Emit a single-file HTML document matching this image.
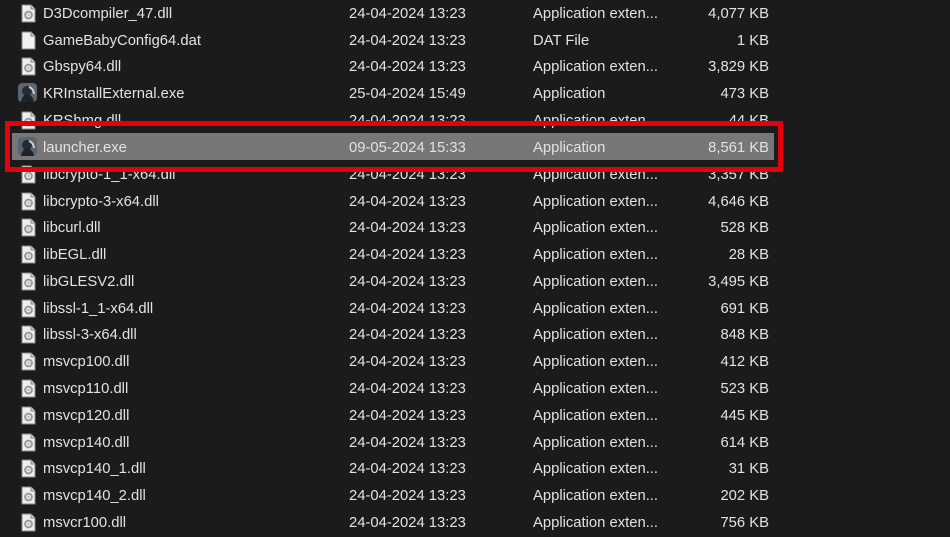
<!DOCTYPE html>
<html><head><meta charset="utf-8"><style>
html,body{margin:0;padding:0;background:#1b1b1b;width:950px;height:537px;overflow:hidden}
body{position:relative;font-family:"Liberation Sans",sans-serif;font-size:14.8px;color:#e2e2e2}
.r{position:absolute;left:0;width:950px;height:27px;line-height:31px}
.r span{position:absolute;white-space:nowrap}
.n{left:43px}.d{left:349px}.t{left:533px}.s{right:181px}
.ic{position:absolute;left:21px;top:5px;width:15px;height:19px}
.hl{position:absolute;left:12px;top:133px;width:762px;height:27px;background:#777}
.box{position:absolute;left:5px;top:121px;width:768px;height:41px;border:5px solid #e1000c}
</style></head><body>
<div class="hl"></div>
<svg width="0" height="0" style="position:absolute"><defs>
<symbol id="pg" viewBox="0 0 15 19"><path d="M1 1h9l4 4v13H1z" fill="#f2f2f2" stroke="#888" stroke-width="1"/><path d="M10 1v4h4" fill="#ccc" stroke="#888" stroke-width="1"/></symbol>
<symbol id="dl" viewBox="0 0 15 19"><path d="M1 1h9l4 4v13H1z" fill="#eee" stroke="#888" stroke-width="1"/><path d="M10 1v4h4" fill="#ccc" stroke="#888"/><circle cx="7.5" cy="11" r="3.4" fill="none" stroke="#9a9a9a" stroke-width="2"/><circle cx="7.5" cy="11" r="1.2" fill="#bbb"/></symbol>
<symbol id="ex" viewBox="0 0 19 19"><rect x="0" y="0" width="19" height="19" rx="4" fill="#5d6470"/><circle cx="9" cy="8" r="5" fill="#222a33"/><path d="M3 19c1-6 4-8 6-8s6 2 7 8z" fill="#1d232b"/><path d="M11 4c3 1 5 4 5 7" stroke="#c8ccd2" stroke-width="2" fill="none"/></symbol>
</defs></svg>
<div class="r" style="top:-1px"><svg class="ic"><use href="#dl"/></svg><span class="n">D3Dcompiler_47.dll</span><span class="d">24-04-2024 13:23</span><span class="t">Application exten...</span><span class="s">4,077 KB</span></div>
<div class="r" style="top:26px"><svg class="ic"><use href="#pg"/></svg><span class="n">GameBabyConfig64.dat</span><span class="d">24-04-2024 13:23</span><span class="t">DAT File</span><span class="s">1 KB</span></div>
<div class="r" style="top:52px"><svg class="ic"><use href="#dl"/></svg><span class="n">Gbspy64.dll</span><span class="d">24-04-2024 13:23</span><span class="t">Application exten...</span><span class="s">3,829 KB</span></div>
<div class="r" style="top:79px"><svg class="ic" style="left:18px;top:4px;width:19px;height:19px"><use href="#ex"/></svg><span class="n">KRInstallExternal.exe</span><span class="d">25-04-2024 15:49</span><span class="t">Application</span><span class="s">473 KB</span></div>
<div class="r" style="top:106px"><svg class="ic"><use href="#dl"/></svg><span class="n">KRShmg.dll</span><span class="d">24-04-2024 13:23</span><span class="t">Application exten...</span><span class="s">44 KB</span></div>
<div class="r" style="top:133px"><svg class="ic" style="left:18px;top:4px;width:19px;height:19px"><use href="#ex"/></svg><span class="n">launcher.exe</span><span class="d">09-05-2024 15:33</span><span class="t">Application</span><span class="s">8,561 KB</span></div>
<div class="r" style="top:160px"><svg class="ic"><use href="#dl"/></svg><span class="n">libcrypto-1_1-x64.dll</span><span class="d">24-04-2024 13:23</span><span class="t">Application exten...</span><span class="s">3,357 KB</span></div>
<div class="r" style="top:187px"><svg class="ic"><use href="#dl"/></svg><span class="n">libcrypto-3-x64.dll</span><span class="d">24-04-2024 13:23</span><span class="t">Application exten...</span><span class="s">4,646 KB</span></div>
<div class="r" style="top:213px"><svg class="ic"><use href="#dl"/></svg><span class="n">libcurl.dll</span><span class="d">24-04-2024 13:23</span><span class="t">Application exten...</span><span class="s">528 KB</span></div>
<div class="r" style="top:240px"><svg class="ic"><use href="#dl"/></svg><span class="n">libEGL.dll</span><span class="d">24-04-2024 13:23</span><span class="t">Application exten...</span><span class="s">28 KB</span></div>
<div class="r" style="top:267px"><svg class="ic"><use href="#dl"/></svg><span class="n">libGLESV2.dll</span><span class="d">24-04-2024 13:23</span><span class="t">Application exten...</span><span class="s">3,495 KB</span></div>
<div class="r" style="top:294px"><svg class="ic"><use href="#dl"/></svg><span class="n">libssl-1_1-x64.dll</span><span class="d">24-04-2024 13:23</span><span class="t">Application exten...</span><span class="s">691 KB</span></div>
<div class="r" style="top:320px"><svg class="ic"><use href="#dl"/></svg><span class="n">libssl-3-x64.dll</span><span class="d">24-04-2024 13:23</span><span class="t">Application exten...</span><span class="s">848 KB</span></div>
<div class="r" style="top:347px"><svg class="ic"><use href="#dl"/></svg><span class="n">msvcp100.dll</span><span class="d">24-04-2024 13:23</span><span class="t">Application exten...</span><span class="s">412 KB</span></div>
<div class="r" style="top:374px"><svg class="ic"><use href="#dl"/></svg><span class="n">msvcp110.dll</span><span class="d">24-04-2024 13:23</span><span class="t">Application exten...</span><span class="s">523 KB</span></div>
<div class="r" style="top:401px"><svg class="ic"><use href="#dl"/></svg><span class="n">msvcp120.dll</span><span class="d">24-04-2024 13:23</span><span class="t">Application exten...</span><span class="s">445 KB</span></div>
<div class="r" style="top:428px"><svg class="ic"><use href="#dl"/></svg><span class="n">msvcp140.dll</span><span class="d">24-04-2024 13:23</span><span class="t">Application exten...</span><span class="s">614 KB</span></div>
<div class="r" style="top:454px"><svg class="ic"><use href="#dl"/></svg><span class="n">msvcp140_1.dll</span><span class="d">24-04-2024 13:23</span><span class="t">Application exten...</span><span class="s">31 KB</span></div>
<div class="r" style="top:481px"><svg class="ic"><use href="#dl"/></svg><span class="n">msvcp140_2.dll</span><span class="d">24-04-2024 13:23</span><span class="t">Application exten...</span><span class="s">202 KB</span></div>
<div class="r" style="top:508px"><svg class="ic"><use href="#dl"/></svg><span class="n">msvcr100.dll</span><span class="d">24-04-2024 13:23</span><span class="t">Application exten...</span><span class="s">756 KB</span></div>
<div class="box"></div>
</body></html>
